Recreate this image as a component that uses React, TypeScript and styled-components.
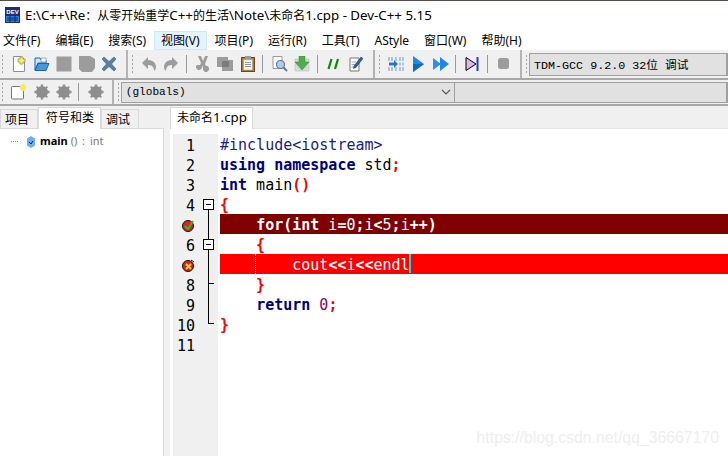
import React from 'react';
import styled, { createGlobalStyle } from 'styled-components';

const GlobalStyle = createGlobalStyle`
    html, body {
        margin: 0;
        padding: 0;
        background: #fff;
        overflow: hidden;
    }
`;

const uiFont = `'Noto Sans', 'Noto Sans CJK SC', sans-serif`;
const codeFont = `'DejaVu Sans Mono', 'Noto Sans CJK SC', monospace`;

const Window = styled.div`
    position: relative;
    display: flex;
    flex-direction: column;
    width: 728px;
    height: 456px;
    overflow: hidden;
    background: #f0f0f0;
    font-family: ${uiFont};
    color: #000;
`;

const TitleBar = styled.header`
    display: flex;
    align-items: center;
    gap: 5px;
    height: 29px;
    padding-left: 5px;
    border-top: 1px solid #5a4a4a;
    background: #fff;
    font-size: 12px;
    box-sizing: border-box;
`;

const Latin = styled.span`
    font-size: 13.3px;
`;

const MenuBar = styled.nav`
    display: flex;
    align-items: center;
    height: 21px;
    padding-top: 1px;
    box-sizing: border-box;
    margin-left: -4.5px;
    background: #fff;
    font-size: 12px;
`;

const MenuItem = styled.div<{ $active?: boolean }>`
    padding: 0 6.5px;
    line-height: 17px;
    white-space: nowrap;
    border: 1px solid ${(p) => (p.$active ? '#cce8ff' : 'transparent')};
    background: ${(p) => (p.$active ? '#e5f3ff' : 'transparent')};
`;

const ToolRow = styled.div<{ $height: number }>`
    display: flex;
    align-items: center;
    height: ${(p) => p.$height}px;
    border-bottom: 2px solid #a8a8a8;
    box-sizing: border-box;
    background: #f0f0f0;
`;

const Grip = styled.div<{ $first?: boolean }>`
    width: 3px;
    height: 20px;
    margin: 0 3.7px 0 ${(p) => (p.$first ? 1 : 3)}px;
    flex: none;
    background-image: radial-gradient(#a0a0a0 1px, transparent 1px);
    background-size: 3px 4px;
`;

const Slot = styled.div`
    display: flex;
    align-items: center;
    justify-content: center;
    width: 22.6px;
    height: 20px;
    flex: none;
`;

const Sep = styled.div`
    width: 1px;
    height: 18px;
    margin: 0 5px 0 3px;
    flex: none;
    background: #9a9a9a;
`;

const BandEnd = styled.div`
    width: 2px;
    align-self: stretch;
    margin-left: 5px;
    flex: none;
    background: #b4b4b4;
`;

const Combo = styled.div<{ $width?: number; $height: number; $size: number }>`
    display: flex;
    align-items: center;
    justify-content: space-between;
    flex: ${(p) => (p.$width ? 'none' : 1)};
    width: ${(p) => (p.$width ? `${p.$width}px` : 'auto')};
    height: ${(p) => p.$height}px;
    padding: 0 4px;
    margin-left: -3px;
    box-sizing: border-box;
    border: 1px solid #a0a0a0;
    border-right-width: 2px;
    background: #e1e1e1;
    font-family: 'Liberation Mono', 'Noto Sans CJK SC', monospace;
    font-size: ${(p) => p.$size}px;
`;

const Workspace = styled.main`
    flex: 1;
    display: flex;
    min-height: 0;
    padding-top: 1px;
`;

const LeftPane = styled.aside`
    display: flex;
    flex-direction: column;
    width: 164px;
    flex: none;
`;

const TabStrip = styled.div`
    display: flex;
    align-items: flex-end;
    height: 21px;
    flex: none;
`;

const Tab = styled.div<{ $active?: boolean; $width: number; $inset: number }>`
    position: relative;
    z-index: 1;
    display: flex;
    align-items: center;
    width: ${(p) => p.$width}px;
    height: ${(p) => (p.$active ? 22 : 19)}px;
    margin-bottom: ${(p) => (p.$active ? -1 : 0)}px;
    padding-left: ${(p) => p.$inset}px;
    padding-bottom: ${(p) => (p.$active ? 3 : 0)}px;
    box-sizing: border-box;
    border: 1px solid #d9d9d9;
    border-bottom: none;
    background: ${(p) => (p.$active ? '#fff' : '#f0f0f0')};
    font-size: 12px;
`;

const TreePane = styled.div`
    flex: 1;
    display: flex;
    align-items: flex-start;
    padding: 4px 0 0 11px;
    background: #fff;
    border-top: 1px solid #d9d9d9;
    border-right: 1px solid #d9d9d9;
    font-size: 11px;
    line-height: 16px;
`;

const TreeDots = styled.span`
    width: 7px;
    margin: 8px 9px 0 0;
    border-top: 1px dotted #888;
`;

const Name = styled.b`
    margin-left: 5px;
    font-weight: 700;
    font-size: 11px;
`;

const Signature = styled.span`
    color: #7a7a7a;
    word-spacing: 2px;
`;

const RightPane = styled.section`
    flex: 1;
    display: flex;
    flex-direction: column;
    min-width: 0;
    padding-left: 6px;
`;

const Editor = styled.div`
    flex: 1;
    display: flex;
    min-height: 0;
    padding: 5px 0 0 3px;
    border-top: 1px solid #e6e6e6;
    background: #fff;
`;

const Gutter = styled.div`
    display: flex;
    flex-direction: column;
    width: 45px;
    flex: none;
    background: #f0f0f0;
`;

const GutterRow = styled.div`
    display: flex;
    align-items: center;
    height: 20px;
`;

const LineNumber = styled.div`
    display: flex;
    align-items: center;
    justify-content: flex-end;
    width: 22px;
    height: 20px;
    padding-top: 3px;
    box-sizing: border-box;
    font-family: ${codeFont};
    font-size: 15px;
    color: #000;
`;

const FoldCell = styled.div`
    position: relative;
    width: 23px;
    height: 20px;
    flex: none;
`;

const FoldLine = styled.span<{ $from?: number; $to?: number }>`
    position: absolute;
    left: 13px;
    top: ${(p) => p.$from ?? 0}px;
    width: 1px;
    height: ${(p) => (p.$to ?? 20) - (p.$from ?? 0)}px;
    background: #000;
`;

const FoldTick = styled.span`
    position: absolute;
    left: 13px;
    top: 9px;
    width: 6px;
    height: 1px;
    background: #000;
`;

const FoldBox = styled.span`
    position: absolute;
    left: 8px;
    top: 5px;
    width: 9px;
    height: 9px;
    border: 1px solid #000;
    background: #fff;

    &::after {
        content: '';
        position: absolute;
        left: 2px;
        top: 4px;
        width: 5px;
        height: 1px;
        background: #000;
    }
`;

const Code = styled.div`
    flex: 1;
    display: flex;
    flex-direction: column;
    min-width: 0;
    margin-left: 2px;
    font-family: ${codeFont};
    font-size: 15px;
`;

const CodeLine = styled.div<{ $mark?: 'active' | 'error' }>`
    position: relative;
    height: 20px;
    padding-top: 1px;
    box-sizing: border-box;
    line-height: 20px;
    white-space: pre;
    background: ${(p) => (p.$mark === 'active' ? '#800000' : p.$mark === 'error' ? '#ff0000' : 'transparent')};
    color: ${(p) => (p.$mark ? '#fff' : '#000')};
`;

const Keyword = styled.span`
    color: #000080;
    font-weight: 700;
`;

const Punct = styled.span`
    color: #ff0000;
    font-weight: 700;
`;

const Preproc = styled.span`
    color: #1b1b90;
`;

const Num = styled.span`
    color: #800080;
`;

const Strong = styled.span`
    font-weight: 700;
`;

const Guide = styled.span`
    position: absolute;
    left: 35px;
    top: 0;
    height: 20px;
    border-left: 1px dotted #b8d0e0;
`;

const Caret = styled.span`
    display: inline-block;
    width: 2px;
    height: 19px;
    margin: -1px 0 0 -1px;
    vertical-align: top;
    background: #00e0e0;
`;

const Watermark = styled.div`
    position: absolute;
    right: 9px;
    bottom: 9px;
    color: #eeeeee;
    font-family: 'Liberation Sans', sans-serif;
    font-size: 15.8px;
`;

const Svg: React.FC<{ children: React.ReactNode }> = ({ children }) => (
    <svg width="16" height="16" viewBox="0 0 16 16">
        {children}
    </svg>
);

const NewIcon = () => (
    <Svg>
        <path d="M2.5.5h8l3 3v12h-11z" fill="#fff" stroke="#8a8ab8" />
        <path d="M9 1v2H7v3h2v2h3V6h2V3h-2V1z" fill="#f4f070" stroke="#a09a20" strokeWidth=".8" />
    </Svg>
);

const OpenIcon = () => (
    <Svg>
        <path d="M1 14V2h5l1 2h5v3H4l-3 7z" fill="#cfe4f7" stroke="#1565b0" />
        <path d="M1 14.500l3-7h11l-3 7z" fill="#4a96dc" stroke="#1565b0" />
        <path d="M7 2h5v4H7z" fill="#fff" stroke="#6a8ab0" strokeWidth=".7" />
    </Svg>
);

const SaveIcon = () => (
    <Svg>
        <rect x=".5" y=".5" width="15" height="15" fill="#9c9c9c" />
    </Svg>
);

const SaveAllIcon = () => (
    <Svg>
        <path d="M0 0h11l5 3v9l-3 4H3l-3-3z" fill="#9c9c9c" />
    </Svg>
);

const CloseIcon = () => (
    <Svg>
        <path d="M1 3l2-2 5 4.500L13 1l2 2-4.500 5 4.500 5-2 2-5-4.500L3 15l-2-2 4.500-5z" fill="#5a7f9e" stroke="#3e5e7a" strokeWidth=".6" />
    </Svg>
);

const UndoIcon = () => (
    <Svg>
        <path d="M1 7l6-6v3c5 0 8 3 8 7 0 2-1 3-2 4 0-4-2-6-6-6v4z" fill="#9c9c9c" />
    </Svg>
);

const RedoIcon = () => (
    <Svg>
        <path d="M15 7L9 1v3c-5 0-8 3-8 7 0 2 1 3 2 4 0-4 2-6 6-6v4z" fill="#9c9c9c" />
    </Svg>
);

const CutIcon = () => (
    <Svg>
        <path d="M3 0h3l2 5 2-5h3l-3 8 1 2h2l1 2v2l-2 2h-2l-2-2V11L8 9.500 7 11v1l-2 2H3l-2-2v-2l1-1h3l1-2z" fill="#9c9c9c" />
    </Svg>
);

const CopyIcon = () => (
    <Svg>
        <path d="M0 1h11v3h5v11H5v-4H0z" fill="#9c9c9c" />
        <path d="M5 5h7v6H5z" fill="#7c7c7c" />
    </Svg>
);

const PasteIcon = () => (
    <Svg>
        <rect x="1.500" y="1.500" width="13" height="14" fill="#a87a3c" stroke="#70470f" />
        <rect x="3.500" y="3.500" width="9" height="10.500" fill="#f5f5f0" stroke="#999" strokeWidth=".5" />
        <rect x="5" y="0" width="6" height="3.500" fill="#9a9a9a" />
        <path d="M5 6.500h6M5 8.500h6M5 10.500h6" stroke="#999" />
    </Svg>
);

const FindIcon = () => (
    <Svg>
        <path d="M1 .5h9v12H1z" fill="#fff" stroke="#9a9a9a" />
        <circle cx="8.500" cy="8.500" r="4" fill="#a8d0ee" stroke="#667788" strokeWidth="1.200" />
        <path d="M11.500 11.500l3.500 3.500" stroke="#667788" strokeWidth="2" />
    </Svg>
);

const GotoIcon = () => (
    <Svg>
        <path d="M1 3h3v9h8V3h3v12H1z" fill="#dcdcdc" stroke="#b0b0b0" strokeWidth=".5" />
        <path d="M5 0h6v6h4l-7 8-7-8h4z" fill="#4cae4c" stroke="#2f8a2f" strokeWidth=".5" />
    </Svg>
);

const CommentIcon = () => (
    <Svg>
        <path d="M5.500 3L2.500 13M12 3L9 13" stroke="#0a8a0a" strokeWidth="2.200" />
    </Svg>
);

const EditFormatIcon = () => (
    <Svg>
        <path d="M2 2h9v13H2z" fill="#fff" stroke="#777" />
        <path d="M3.500 6h5M3.500 8.500h5M3.500 11h5" stroke="#aaa" />
        <path d="M6 10l7-9 2 1.500-7 9-2.500 1z" fill="#2a5fb0" stroke="#16356a" strokeWidth=".5" />
    </Svg>
);

const CompileIcon = () => (
    <Svg>
        <path d="M0 1h2v4H0zM3 1h2v4H3zM7 1h2v4H7zM11 1h2v4h-2zM14 1h2v4h-2zM11 6.500h2v3h-2zM14 6.500h2v3h-2zM0 11h2v4H0zM3 11h2v4H3zM7 11h2v4H7zM11 11h2v4h-2zM14 11h2v4h-2z" fill="#a9c4e4" />
        <path d="M1 6.500h5V4l4 4-4 4V9.500H1z" fill="#2a76c8" />
    </Svg>
);

const RunIcon = () => (
    <Svg>
        <path d="M3 0l11 8-11 8z" fill="#1e88e5" />
        <path d="M3 8h11l-11 8z" fill="#1167b8" />
    </Svg>
);

const RunAllIcon = () => (
    <Svg>
        <path d="M0 2l8 6-8 6z" fill="#2f8fe0" />
        <path d="M7 1l9 7-9 7z" fill="#1e88e5" />
    </Svg>
);

const DebugIcon = () => (
    <Svg>
        <path d="M2 1.500l10 6.500-10 6.500z" fill="#d6b8f4" stroke="#000" />
        <path d="M13.500 1v14" stroke="#1f3fd8" strokeWidth="2" />
    </Svg>
);

const StopIcon = () => (
    <Svg>
        <rect x="2" y="2" width="11" height="11" rx="2.500" fill="#9c9c9c" />
    </Svg>
);

const NewClassIcon = () => (
    <Svg>
        <rect x=".5" y="2.500" width="12" height="12.500" rx="1" fill="#fff" stroke="#777" />
        <circle cx="12" cy="3.500" r="3" fill="#f8f040" stroke="#e8e8a0" />
    </Svg>
);

const GearIcon = () => (
    <Svg>
        <circle cx="8" cy="8" r="6" fill="#8e8e8e" />
        <path d="M6.800.5h2.400v3H6.800zM6.800 12.500h2.400v3H6.800zM.5 6.800h3v2.400h-3zM12.500 6.800h3v2.400h-3zM2 3.200L3.200 2l2.300 2.300-1.200 1.200zM12.800 2L14 3.200l-2.300 2.300-1.200-1.200zM2 12.800l2.300-2.300 1.200 1.200L3.200 14zM10.500 11.700l1.200-1.200 2.300 2.300-1.200 1.200z" fill="#8e8e8e" />
    </Svg>
);

const Chevron = () => (
    <svg width="10" height="6" viewBox="0 0 10 6">
        <path d="M1 1l4 4 4-4" fill="none" stroke="#555" strokeWidth="1.100" />
    </svg>
);

const Logo = () => (
    <svg width="15" height="16" viewBox="0 0 15 16">
        <rect width="15" height="16" fill="#1c2f6e" />
        <rect x="1" y="9" width="13" height="6" fill="#2f7fe0" />
        <path d="M2 11h11M2 13h11M5 9v6M10 9v6" stroke="#0d2a78" />
        <text x="7.500" y="7" textAnchor="middle" fontSize="6" fontWeight="700" fontFamily="Liberation Sans" fill="#fff">
            DEV
        </text>
    </svg>
);

const BreakpointOk = () => (
    <svg width="13" height="13" viewBox="0 0 13 13">
        <circle cx="6" cy="7" r="5.500" fill="#e02020" stroke="#111" />
        <path d="M3 7l3 3 5-8" fill="none" stroke="#22c022" strokeWidth="2" />
    </svg>
);

const BreakpointBad = () => (
    <svg width="13" height="13" viewBox="0 0 13 13">
        <circle cx="6" cy="7" r="5.500" fill="#e02020" stroke="#111" />
        <path d="M4 5l5 5M9 5l-5 5" stroke="#f4e020" strokeWidth="1.800" />
        <path d="M9 1l3 2" stroke="#111" />
    </svg>
);

const SymbolIcon = () => (
    <svg width="8" height="12" viewBox="0 0 8 12" style={{ marginTop: 3 }}>
        <path d="M4 0l4 2.500v7L4 12l-4-2.500v-7z" fill="#6bb0f5" />
        <path d="M2 6l2 2 2-3" fill="none" stroke="#0a1a3a" strokeWidth="1" />
    </svg>
);

type FoldKind = 'start' | 'box' | 'line' | 'tick' | 'end' | null;

const folds: FoldKind[] = [null, null, null, 'start', 'line', 'box', 'line', 'tick', 'line', 'end', null];

const codeLines: Array<{ mark?: 'active' | 'error'; content: React.ReactNode }> = [
    { content: <Preproc>#include&lt;iostream&gt;</Preproc> },
    { content: <><Keyword>using namespace</Keyword> std<Punct>;</Punct></> },
    { content: <><Keyword>int</Keyword> main<Punct>()</Punct></> },
    { content: <Punct>{'{'}</Punct> },
    {
        mark: 'active',
        content: (
            <>
                {'    '}<Strong>for(int</Strong> i<Strong>=</Strong>0<Strong>;</Strong>i<Strong>&lt;</Strong>5<Strong>;</Strong>i<Strong>++)</Strong>
            </>
        ),
    },
    { content: <Punct>{'    {'}</Punct> },
    {
        mark: 'error',
        content: (
            <>
                <Guide />
                {'        cout'}<Strong>&lt;&lt;</Strong>i<Strong>&lt;&lt;</Strong>endl
                <Caret />
            </>
        ),
    },
    { content: <Punct>{'    }'}</Punct> },
    { content: <>{'    '}<Keyword>return</Keyword> <Num>0</Num><Punct>;</Punct></> },
    { content: <Punct>{'}'}</Punct> },
    { content: '' },
];

const FoldMark: React.FC<{ kind: FoldKind }> = ({ kind }) => (
    <FoldCell>
        {kind === 'start' && <><FoldLine $from={10} /><FoldBox /></>}
        {kind === 'box' && <><FoldLine /><FoldBox /></>}
        {kind === 'line' && <FoldLine />}
        {kind === 'tick' && <><FoldLine /><FoldTick /></>}
        {kind === 'end' && <><FoldLine $to={10} /><FoldTick /></>}
    </FoldCell>
);

const gutterLabel = (n: number): React.ReactNode => {
    if (n === 5) return <BreakpointOk />;
    if (n === 7) return <BreakpointBad />;
    return n;
};

const App: React.FC = () => (
    <Window>
        <GlobalStyle />
        <TitleBar>
            <Logo />
            <span>
                <Latin>E:\C++\Re</Latin>：从零开始重学<Latin>C++</Latin>的生活<Latin>\Note\</Latin>未命名<Latin>1.cpp - Dev-C++ 5.15</Latin>
            </span>
        </TitleBar>
        <MenuBar>
            <MenuItem>文件(F)</MenuItem>
            <MenuItem>编辑(E)</MenuItem>
            <MenuItem>搜索(S)</MenuItem>
            <MenuItem $active>视图(V)</MenuItem>
            <MenuItem>项目(P)</MenuItem>
            <MenuItem>运行(R)</MenuItem>
            <MenuItem>工具(T)</MenuItem>
            <MenuItem>AStyle</MenuItem>
            <MenuItem>窗口(W)</MenuItem>
            <MenuItem>帮助(H)</MenuItem>
        </MenuBar>
        <ToolRow $height={30}>
            <Grip $first />
            <Slot><NewIcon /></Slot>
            <Slot><OpenIcon /></Slot>
            <Slot><SaveIcon /></Slot>
            <Slot><SaveAllIcon /></Slot>
            <Slot><CloseIcon /></Slot>
            <BandEnd />
            <Grip />
            <Slot><UndoIcon /></Slot>
            <Slot><RedoIcon /></Slot>
            <Sep />
            <Slot><CutIcon /></Slot>
            <Slot><CopyIcon /></Slot>
            <Slot><PasteIcon /></Slot>
            <Sep />
            <Slot><FindIcon /></Slot>
            <Slot><GotoIcon /></Slot>
            <Sep />
            <Slot><CommentIcon /></Slot>
            <Slot><EditFormatIcon /></Slot>
            <BandEnd />
            <Grip />
            <Slot><CompileIcon /></Slot>
            <Slot><RunIcon /></Slot>
            <Slot><RunAllIcon /></Slot>
            <Sep />
            <Slot><DebugIcon /></Slot>
            <Sep />
            <Slot><StopIcon /></Slot>
            <BandEnd />
            <Grip />
            <Combo $height={23} $size={11.7}>TDM-GCC 9.2.0 32位 调试</Combo>
        </ToolRow>
        <ToolRow $height={26}>
            <Grip $first />
            <Slot><NewClassIcon /></Slot>
            <Slot><GearIcon /></Slot>
            <Slot><GearIcon /></Slot>
            <Sep />
            <Slot><GearIcon /></Slot>
            <BandEnd />
            <Grip />
            <Combo $width={336} $height={21} $size={11.1}>
                (globals)
                <Chevron />
            </Combo>
            <Combo $height={21} $size={11.1} />
        </ToolRow>
        <Workspace>
            <LeftPane>
                <TabStrip>
                    <Tab $width={38} $inset={4}>项目</Tab>
                    <Tab $width={63} $inset={7} $active>符号和类</Tab>
                    <Tab $width={38} $inset={4}>调试</Tab>
                </TabStrip>
                <TreePane>
                    <TreeDots />
                    <SymbolIcon />
                    <span>
                        <Name>main</Name> <Signature>() : int</Signature>
                    </span>
                </TreePane>
            </LeftPane>
            <RightPane>
                <TabStrip>
                    <Tab $width={83} $inset={6} $active>未命名<Latin>1.cpp</Latin></Tab>
                </TabStrip>
                <Editor>
                    <Gutter>
                        {folds.map((kind, i) => (
                            <GutterRow key={i}>
                                <LineNumber>{gutterLabel(i + 1)}</LineNumber>
                                <FoldMark kind={kind} />
                            </GutterRow>
                        ))}
                    </Gutter>
                    <Code>
                        {codeLines.map((line, i) => (
                            <CodeLine key={i} $mark={line.mark}>
                                {line.content}
                            </CodeLine>
                        ))}
                    </Code>
                </Editor>
            </RightPane>
        </Workspace>
        <Watermark>https://blog.csdn.net/qq_36667170</Watermark>
    </Window>
);

export default App;
